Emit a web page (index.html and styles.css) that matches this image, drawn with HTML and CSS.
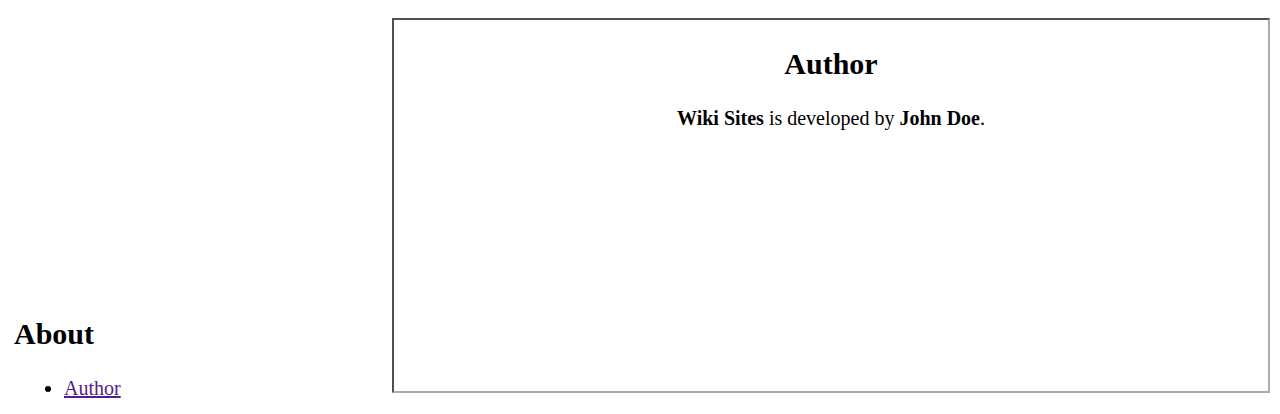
FILE: index.html
```html
<!DOCTYPE html>
<html lang="en">
<head>
<meta charset="utf-8">
<title>Wiki Sites</title>
<link rel="stylesheet" href="styles.css">
</head>
<body>
<div class="page">
  <nav class="side">
    <h2 class="side-title">About</h2>
    <ul class="side-list">
      <li><a class="side-link" href="#author">Author</a></li>
    </ul>
  </nav>
  <main class="frame">
    <h2 class="frame-title">Author</h2>
    <p class="frame-text"><b>Wiki Sites</b> is developed by <b>John Doe</b>.</p>
  </main>
</div>
</body>
</html>
```
FILE: styles.css
```css
html, body {
  margin: 0;
  padding: 0;
  background: #fff;
}
body {
  font-family: "Liberation Serif", "Times New Roman", serif;
  font-size: 20px;
  color: #000;
}
.page {
  display: flex;
  align-items: flex-end;
  height: 414px;
}
.side {
  box-sizing: border-box;
  width: 392px;
  flex: none;
  padding-left: 14px;
}
.side-title {
  font-size: 30px;
  font-weight: bold;
  line-height: normal;
  margin: 0 0 26px;
}
.side-list {
  margin: 0 0 14px;
  padding-left: 50px;
  line-height: normal;
}
.side-link {
  color: #551a8b;
  text-decoration: underline;
}
.frame {
  box-sizing: border-box;
  width: 878px;
  height: 375px;
  flex: none;
  margin-bottom: 21px;
  border-style: solid;
  border-width: 2px;
  border-color: #4f4f4f #ababab #ababab #4f4f4f;
  text-align: center;
}
.frame-title {
  font-size: 30px;
  font-weight: bold;
  line-height: normal;
  margin: 27px 0 26px;
}
.frame-text {
  margin: 0;
  line-height: normal;
}
```
